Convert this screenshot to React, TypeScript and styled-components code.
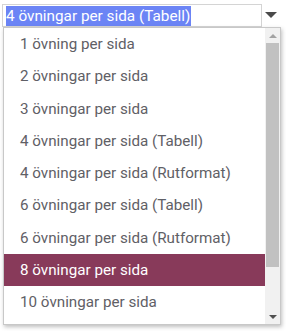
import React from "react";
import styled, { createGlobalStyle } from "styled-components";

const Global = createGlobalStyle`
  html, body { margin: 0; padding: 0; background: #ffffff; }
  body { font-family: Roboto, "Noto Sans", sans-serif; }
`;

const Page = styled.div`
  width: 286px;
  height: 331px;
  position: relative;
  overflow: hidden;
`;

const Header = styled.div`
  display: flex;
  align-items: center;
  padding: 4px 0 0 2px;
  height: 23px;
`;

const Field = styled.div`
  width: 260px;
  border: 1px solid #d4d4d4;
  display: flex;
  align-items: center;
  padding-left: 3px;
  box-sizing: border-box;
  height: 23px;
`;

const Selected = styled.span`
  background: #6b84f5;
  color: #ffffff;
  font-size: 15.3px;
  line-height: 20px;
  padding: 0 1px 0 0;
  white-space: nowrap;
`;

const Caret = styled.div`
  width: 0;
  height: 0;
  margin-left: 3px;
  margin-top: -2px;
  border-left: 6px solid transparent;
  border-right: 6px solid transparent;
  border-top: 6px solid #4a4a4a;
`;

const List = styled.div`
  position: absolute;
  left: 3px;
  top: 27px;
  width: 278px;
  height: 298px;
  border: 1px solid #c8c8c8;
  box-sizing: border-box;
  background: #ffffff;
  box-shadow: 1px 2px 4px rgba(0, 0, 0, 0.25);
  display: flex;
  overflow: hidden;
`;

const Items = styled.div`
  flex: 1;
  display: flex;
  flex-direction: column;
  overflow: hidden;
`;

const Item = styled.div<{ $active?: boolean }>`
  flex: 0 0 32.25px;
  display: flex;
  align-items: center;
  padding-left: 16px;
  font-size: 15.2px;
  color: ${(p) => (p.$active ? "#ffffff" : "#5f6066")};
  background: ${(p) => (p.$active ? "#883a5a" : "transparent")};
  white-space: nowrap;
`;

const Scrollbar = styled.div`
  width: 15px;
  background: #f1f1f1;
  display: flex;
  flex-direction: column;
  align-items: center;
`;

const ArrowBtn = styled.div`
  height: 15px;
  width: 15px;
  display: flex;
  align-items: center;
  justify-content: center;
  flex: 0 0 15px;
`;

const Up = styled.div`
  width: 0;
  height: 0;
  border-left: 4px solid transparent;
  border-right: 4px solid transparent;
  border-bottom: 4px solid #a3a3a3;
`;

const Down = styled.div`
  width: 0;
  height: 0;
  border-left: 4px solid transparent;
  border-right: 4px solid transparent;
  border-top: 4px solid #505050;
`;

const Track = styled.div`
  flex: 1;
  width: 100%;
  display: flex;
  flex-direction: column;
  padding: 0 1px;
  box-sizing: border-box;
`;

const Thumb = styled.div`
  height: 224px;
  background: #c1c1c1;
`;

const options = [
  "1 övning per sida",
  "2 övningar per sida",
  "3 övningar per sida",
  "4 övningar per sida (Tabell)",
  "4 övningar per sida (Rutformat)",
  "6 övningar per sida (Tabell)",
  "6 övningar per sida (Rutformat)",
  "8 övningar per sida",
  "10 övningar per sida",
];

export default function App() {
  return (
    <Page>
      <Global />
      <Header>
        <Field>
          <Selected>4 övningar per sida (Tabell)</Selected>
        </Field>
        <Caret />
      </Header>
      <List>
        <Items>
          {options.map((o) => (
            <Item key={o} $active={o === "8 övningar per sida"}>
              {o}
            </Item>
          ))}
        </Items>
        <Scrollbar>
          <ArrowBtn>
            <Up />
          </ArrowBtn>
          <Track>
            <Thumb />
          </Track>
          <ArrowBtn>
            <Down />
          </ArrowBtn>
        </Scrollbar>
      </List>
    </Page>
  );
}
